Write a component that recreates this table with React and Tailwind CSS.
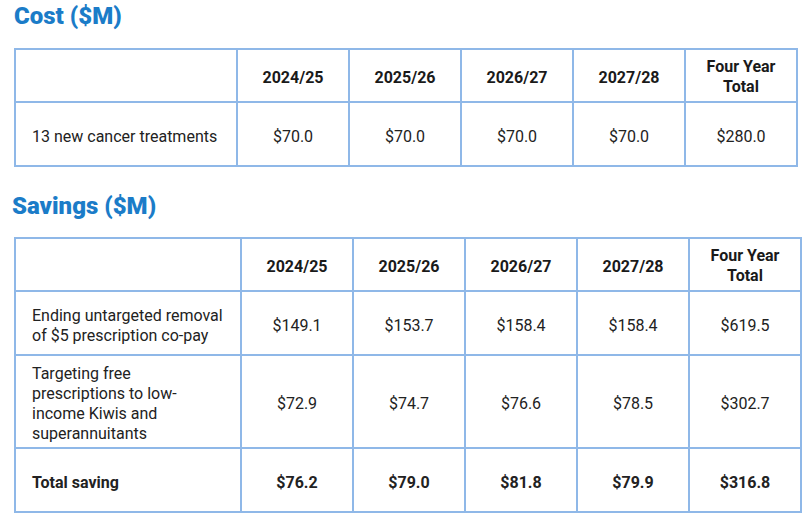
export default function App() {
  const bc = "border-2 border-[#8fb8e8]";
  const font = { fontFamily: "Roboto, 'Liberation Sans', sans-serif" };
  const years = ["2024/25", "2025/26", "2026/27", "2027/28"];
  const Header = () => (
    <tr className="h-[53px]">
      <th className={`${bc}`}></th>
      {years.map((y) => (
        <th key={y} className={`${bc} pt-[4px] text-[16px] font-bold text-[#1a1a1a] text-center`}>{y}</th>
      ))}
      <th className={`${bc} pt-[2px] text-[16px] font-bold text-[#1a1a1a] text-center leading-[20px]`}>
        Four Year<br />Total
      </th>
    </tr>
  );
  const Row = ({ label, vals, h, bold }) => (
    <tr className={h}>
      <td className={`${bc} pl-[16px] pr-[16px] pt-[5px] text-[16px] leading-[20px] text-[#222] ${bold ? "font-bold" : ""}`}>{label}</td>
      {vals.map((v, i) => (
        <td key={i} className={`${bc} pt-[5px] text-center text-[16px] text-[#222] ${bold ? "font-bold" : ""}`}>{v}</td>
      ))}
    </tr>
  );
  return (
    <div className="w-[810px] h-[523px] bg-white overflow-hidden" style={font}>
      <h2 className="pl-[14px] pt-[2px] text-[24px] leading-[28px] font-black text-[#1b7cc8]">Cost ($M)</h2>
      <table className="ml-[14px] mt-[18px] border-collapse table-fixed w-[782px]">
        <colgroup>
          <col className="w-[222px]" />
          <col className="w-[112px]" />
          <col className="w-[112px]" />
          <col className="w-[112px]" />
          <col className="w-[112px]" />
          <col className="w-[112px]" />
        </colgroup>
        <tbody>
          <Header />
          <Row h="h-[64px]" label="13 new cancer treatments" vals={["$70.0", "$70.0", "$70.0", "$70.0", "$280.0"]} />
        </tbody>
      </table>
      <h2 className="pl-[12px] mt-[25px] text-[24px] leading-[28px] font-black text-[#1b7cc8]">Savings ($M)</h2>
      <table className="ml-[14px] mt-[17px] border-collapse table-fixed w-[786px]">
        <colgroup>
          <col className="w-[226px]" />
          <col className="w-[112px]" />
          <col className="w-[112px]" />
          <col className="w-[112px]" />
          <col className="w-[112px]" />
          <col className="w-[112px]" />
        </colgroup>
        <tbody>
          <Header />
          <Row h="h-[64px]" label="Ending untargeted removal of $5 prescription co-pay" vals={["$149.1", "$153.7", "$158.4", "$158.4", "$619.5"]} />
          <Row h="h-[93px]" label="Targeting free prescriptions to low-income Kiwis and superannuitants" vals={["$72.9", "$74.7", "$76.6", "$78.5", "$302.7"]} />
          <Row h="h-[64px]" bold label="Total saving" vals={["$76.2", "$79.0", "$81.8", "$79.9", "$316.8"]} />
        </tbody>
      </table>
    </div>
  );
}
